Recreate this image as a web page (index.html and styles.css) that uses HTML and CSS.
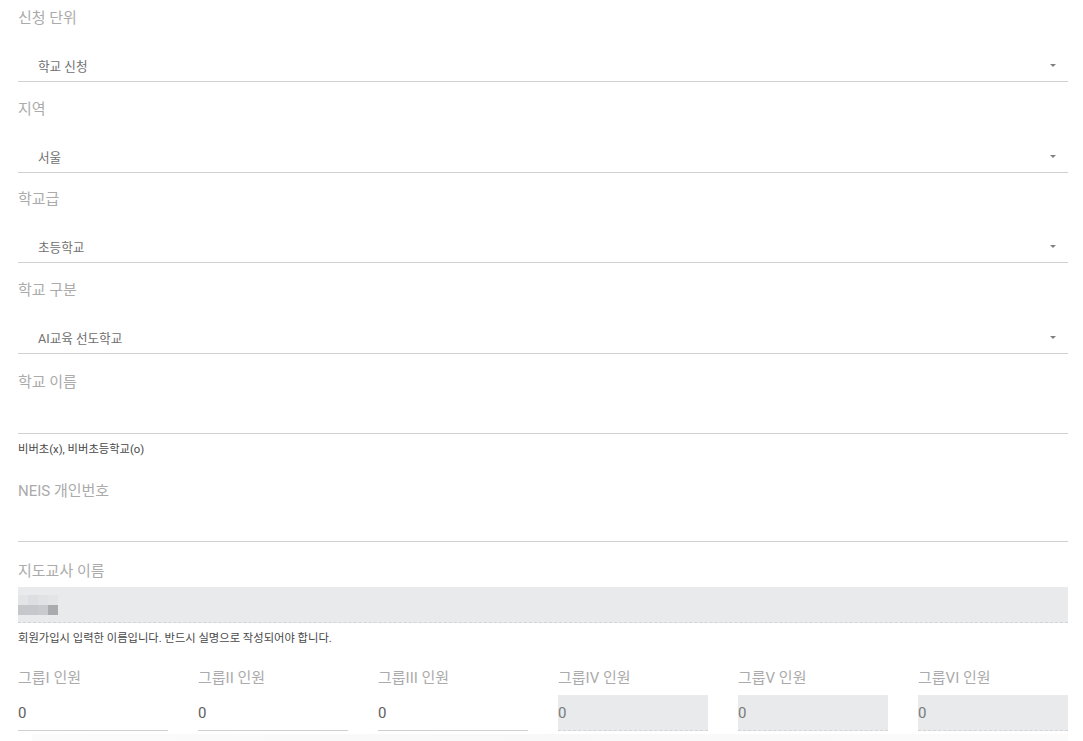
FILE: index.html
```html
<!DOCTYPE html>
<html lang="ko">
<head>
<meta charset="utf-8">
<title>신청</title>
<link rel="stylesheet" href="styles.css">
</head>
<body>
<form class="form">
  <div class="field">
    <div class="label">신청 단위</div>
    <div class="select"><span class="value">학교 신청</span><span class="caret"></span></div>
  </div>
  <div class="field">
    <div class="label">지역</div>
    <div class="select"><span class="value">서울</span><span class="caret"></span></div>
  </div>
  <div class="field tight">
    <div class="label">학교급</div>
    <div class="select"><span class="value">초등학교</span><span class="caret"></span></div>
  </div>
  <div class="field">
    <div class="label">학교 구분</div>
    <div class="select"><span class="value">AI교육 선도학교</span><span class="caret"></span></div>
  </div>
  <div class="field text-field school">
    <div class="label">학교 이름</div>
    <div class="input"></div>
    <div class="hint">비버초(x), 비버초등학교(o)</div>
  </div>
  <div class="field text-field neis">
    <div class="label">NEIS 개인번호</div>
    <div class="input short"></div>
  </div>
  <div class="field teacher">
    <div class="label">지도교사 이름</div>
    <div class="input disabled">
      <div class="mosaic">
        <i class="m1"></i><i class="m2"></i><i class="m3"></i><i class="m1"></i>
        <i class="m4"></i><i class="m4"></i><i class="m5"></i><i class="m6"></i>
      </div>
    </div>
    <div class="hint">회원가입시 입력한 이름입니다. 반드시 실명으로 작성되어야 합니다.</div>
  </div>
  <div class="groups">
    <div class="group"><div class="label">그룹I 인원</div><div class="num">0</div></div>
    <div class="group"><div class="label">그룹II 인원</div><div class="num">0</div></div>
    <div class="group"><div class="label">그룹III 인원</div><div class="num">0</div></div>
    <div class="group"><div class="label">그룹IV 인원</div><div class="num disabled">0</div></div>
    <div class="group"><div class="label">그룹V 인원</div><div class="num disabled">0</div></div>
    <div class="group"><div class="label">그룹VI 인원</div><div class="num disabled">0</div></div>
  </div>
  <div class="footer-shadow"></div>
</form>
</body>
</html>
```

FILE: styles.css
```css
html, body {
  margin: 0;
  padding: 0;
  background: #ffffff;
}
body {
  font-family: Roboto, "Noto Sans CJK KR", "Noto Sans", sans-serif;
  color: #555;
}
.form {
  width: 1050px;
  padding: 0 15px 0 18px;
  display: flex;
  flex-direction: column;
}
.field {
  padding-top: 8px;
  margin-bottom: 9px;
  display: flex;
  flex-direction: column;
}
.field.tight {
  margin-top: -1px;
}
.label {
  font-size: 15px;
  line-height: 20px;
  color: #ababab;
  white-space: nowrap;
}
.select {
  margin-top: 19px;
  height: 35px;
  box-sizing: border-box;
  border-bottom: 1px solid #d0d0d0;
  display: flex;
  align-items: center;
  justify-content: space-between;
  padding: 2px 12px 0 20px;
}
.value {
  font-size: 12.6px;
  color: #707070;
}
.caret {
  width: 0;
  height: 0;
  border-left: 3px solid transparent;
  border-right: 3px solid transparent;
  border-top: 3px solid #808080;
}
.input {
  margin-top: 6px;
  height: 36px;
  box-sizing: border-box;
  border-bottom: 1px solid #d0d0d0;
}
.input.short {
  height: 35px;
}
.hint {
  margin-top: 8px;
  font-size: 11.3px;
  line-height: 16px;
  color: #484848;
  white-space: nowrap;
}
.text-field {
  margin-bottom: 0;
}
.field.school {
  margin-top: 1px;
}
.neis {
  margin-top: 15px;
}
.teacher {
  margin-top: 11px;
}
.input.disabled {
  background: #e8eaec;
  border-bottom: 1px dashed #d2d4d6;
  height: 36px;
  display: flex;
  align-items: center;
}
.mosaic {
  display: grid;
  grid-template-columns: repeat(4, 10px);
  grid-template-rows: repeat(2, 10px);
}
.mosaic i { display: block; }
.m1 { background: #e2e4e6; }
.m2 { background: #dcdee1; }
.m3 { background: #e0e2e4; }
.m4 { background: #c5c7ca; }
.m5 { background: #c8cacd; }
.m6 { background: #a9abae; }
.groups {
  margin-top: 12px;
  display: grid;
  grid-template-columns: repeat(6, 150px);
  column-gap: 30px;
}
.group {
  display: flex;
  flex-direction: column;
}
.num {
  margin-top: 7px;
  height: 36px;
  box-sizing: border-box;
  border-bottom: 1px solid #d0d0d0;
  font-size: 15px;
  color: #606060;
  display: flex;
  align-items: center;
}
.num.disabled {
  background: #e8eaec;
  border-bottom: 1px dashed #d2d4d6;
  color: #7a7a7a;
}
.footer-shadow {
  margin-top: 3px;
  margin-left: 14px;
  height: 20px;
  background: linear-gradient(to right, #fbfbfb, #f8f8f8 50%, #fbfbfb);
}
```
